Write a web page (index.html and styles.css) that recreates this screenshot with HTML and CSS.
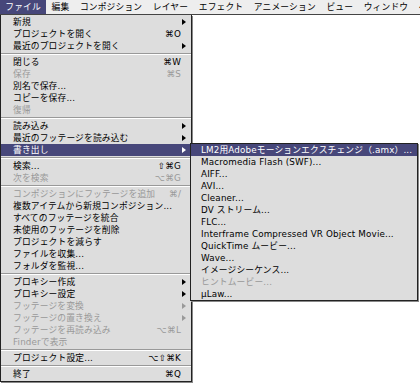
FILE: index.html
```html
<!DOCTYPE html>
<html lang="ja">
<head>
    <meta charset="UTF-8">
    <meta name="viewport" content="width=device-width, initial-scale=1.0">
    <title>ファイルメニュー</title>
    <link rel="stylesheet" href="styles.css">
</head>
<body>

<!-- Menu bar -->
<div class="menubar">
    <span class="title active">ファイル</span>
    <span class="title">編集</span>
    <span class="title">コンポジション</span>
    <span class="title">レイヤー</span>
    <span class="title">エフェクト</span>
    <span class="title">アニメーション</span>
    <span class="title">ビュー</span>
    <span class="title">ウィンドウ</span>
    <span class="title">ヘルプ</span>
</div>

<!-- File menu -->
<ul class="menu">
    <li class="item"><span class="label">新規</span><span class="arrow"></span></li>
    <li class="item"><span class="label">プロジェクトを開く</span><span class="key">⌘O</span></li>
    <li class="item"><span class="label">最近のプロジェクトを開く</span><span class="arrow"></span></li>
    <li class="sep"></li>
    <li class="item"><span class="label">閉じる</span><span class="key">⌘W</span></li>
    <li class="item off"><span class="label">保存</span><span class="key">⌘S</span></li>
    <li class="item"><span class="label">別名で保存...</span></li>
    <li class="item"><span class="label">コピーを保存...</span></li>
    <li class="item off"><span class="label">復帰</span></li>
    <li class="sep"></li>
    <li class="item"><span class="label">読み込み</span><span class="arrow"></span></li>
    <li class="item"><span class="label">最近のフッテージを読み込む</span><span class="arrow"></span></li>
    <li class="item open">
        <span class="label">書き出し</span><span class="arrow"></span>

        <!-- Export submenu -->
        <ul class="submenu">
            <li class="item hilite"><span class="label">LM2用Adobeモーションエクスチェンジ（.amx）...</span></li>
            <li class="item"><span class="label">Macromedia Flash (SWF)...</span></li>
            <li class="item"><span class="label">AIFF...</span></li>
            <li class="item"><span class="label">AVI...</span></li>
            <li class="item"><span class="label">Cleaner...</span></li>
            <li class="item"><span class="label">DV ストリーム...</span></li>
            <li class="item"><span class="label">FLC...</span></li>
            <li class="item"><span class="label">Interframe Compressed VR Object Movie...</span></li>
            <li class="item"><span class="label">QuickTime ムービー...</span></li>
            <li class="item"><span class="label">Wave...</span></li>
            <li class="item"><span class="label">イメージシーケンス...</span></li>
            <li class="item off"><span class="label">ヒントムービー...</span></li>
            <li class="item"><span class="label">μLaw...</span></li>
        </ul>
    </li>
    <li class="sep"></li>
    <li class="item"><span class="label">検索...</span><span class="key">⇧⌘G</span></li>
    <li class="item off"><span class="label">次を検索</span><span class="key">⌥⌘G</span></li>
    <li class="sep"></li>
    <li class="item off"><span class="label">コンポジションにフッテージを追加</span><span class="key">⌘/</span></li>
    <li class="item"><span class="label">複数アイテムから新規コンポジション...</span></li>
    <li class="item"><span class="label">すべてのフッテージを統合</span></li>
    <li class="item"><span class="label">未使用のフッテージを削除</span></li>
    <li class="item"><span class="label">プロジェクトを減らす</span></li>
    <li class="item"><span class="label">ファイルを収集...</span></li>
    <li class="item"><span class="label">フォルダを監視...</span></li>
    <li class="sep"></li>
    <li class="item"><span class="label">プロキシー作成</span><span class="arrow"></span></li>
    <li class="item"><span class="label">プロキシー設定</span><span class="arrow"></span></li>
    <li class="item off"><span class="label">フッテージを変換</span><span class="arrow"></span></li>
    <li class="item off"><span class="label">フッテージの置き換え</span><span class="arrow"></span></li>
    <li class="item off"><span class="label">フッテージを再読み込み</span><span class="key">⌥⌘L</span></li>
    <li class="item off"><span class="label">Finderで表示</span></li>
    <li class="sep"></li>
    <li class="item"><span class="label">プロジェクト設定...</span><span class="key">⌥⇧⌘K</span></li>
    <li class="sep"></li>
    <li class="item"><span class="label">終了</span><span class="key">⌘Q</span></li>
</ul>

</body>
</html>
```

FILE: styles.css
```css
body { margin: 0; width: 420px; height: 385px; overflow: hidden; background: #fff; color: #000; font-family: "DejaVu Sans", "Noto Sans CJK JP", sans-serif; font-size: 8.75px; letter-spacing: 0.15px; }

/* menu bar */
.menubar { display: flex; height: 14px; background: #eee; border-bottom: 1px solid #444; white-space: nowrap; overflow: hidden; }
.menubar .title { padding: 0 5.3px; line-height: 14px; }
.menubar .title.active { background: #47477a; color: #fff; }

/* pull-down menus */
.menu, .submenu { list-style: none; margin: 0; padding: 0; background: #ddd; box-shadow: 1px 1px 0 #888; }
.menu { width: 190px; padding: 1px 0; border: 1px solid #222; border-top: none; }
.submenu { position: absolute; left: calc(100% - 1px); top: -1px; width: 226px; border: 1px solid #222; }

.item { position: relative; display: flex; align-items: center; height: 12px; line-height: 12px; padding-left: 12px; white-space: nowrap; }
.submenu .item { padding-left: 10px; }
.item .label { flex: 1; }
.item .key { margin-right: 10px; }
.item .arrow { width: 0; height: 0; margin-right: 5px; border-left: 4px solid #000; border-top: 3.5px solid transparent; border-bottom: 3.5px solid transparent; }

.item.off { color: #999; }
.item.off .arrow { border-left-color: #999; }
.item.open, .item.hilite { background: #47477a; color: #fff; }
.item.open > .arrow { border-left-color: #fff; }
.item.open .submenu .item { background: none; color: #000; }
.item.open .submenu .item.hilite { background: #47477a; color: #fff; }
.item.open .submenu .item.off { color: #999; }

.sep { height: 1px; margin: 1px 0; border-top: 1px solid #999; background: #fff; }
```
